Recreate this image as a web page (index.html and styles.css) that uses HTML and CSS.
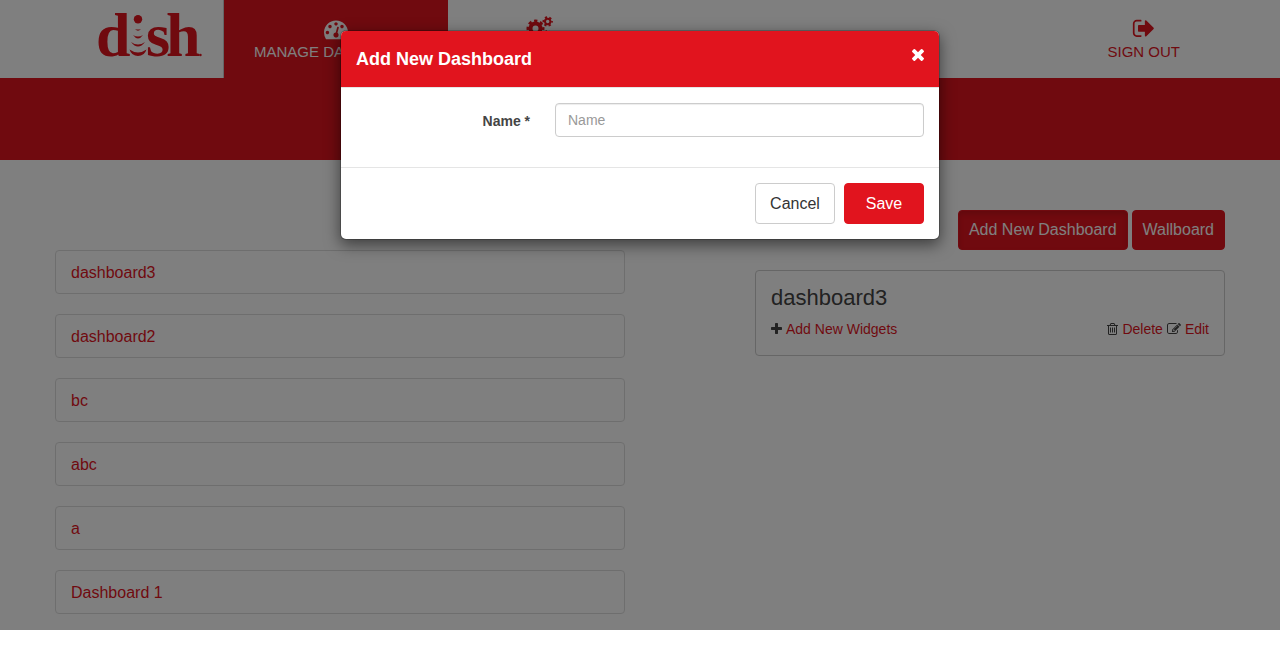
FILE: index.html
```html
<!DOCTYPE html>
<html lang="en">
<head>
<meta charset="utf-8">
<meta name="viewport" content="width=device-width, initial-scale=1">
<title>Manage Dashboard</title>
<link rel="stylesheet" href="styles.css">
</head>
<body>
<div class="app">
  <header class="topbar">
    <a class="brand" href="#" aria-label="dish">
      <svg class="brand-logo" viewBox="0 0 106 46">
        <text class="brand-text" y="42"><tspan x="-2">d</tspan><tspan x="48">s</tspan><tspan x="68">h</tspan></text>
        <circle cx="40" cy="5.300" r="4.200"/>
        <path d="M37 15q3 1 6 0q-3 3.500-6 0zM35 21q5 3 10 0q-5 7-10 0zM33 28q7 5 14 0q-7 9-14 0zM31.500 35.500q8.500 6 17 0q-2 6.500-8.500 6.500t-8.500-6.500z"/>
        <circle cx="102.500" cy="41" r="1.200"/>
      </svg>
    </a>
    <nav class="nav">
      <a class="nav-item nav-item-active" href="#">
        <svg class="nav-icon" viewBox="0 0 1792 1792"><path d="M384 1152q0-53-37.500-90.500t-90.500-37.500-90.500 37.500-37.500 90.500 37.500 90.500 90.500 37.500 90.500-37.500 37.500-90.500zm192-448q0-53-37.500-90.500t-90.500-37.500-90.500 37.500-37.500 90.500 37.500 90.500 90.500 37.500 90.500-37.500 37.500-90.500zm428 481l101-382q6-26-7.500-48.500t-38.500-29.500-48 6.500-30 39.500l-101 382q-60 5-107 43.500t-63 98.500q-20 77 20 146t117 89 146-20 89-117q16-60-6-117t-72-91zm660-33q0-53-37.500-90.500t-90.500-37.500-90.500 37.500-37.500 90.500 37.500 90.500 90.500 37.500 90.500-37.500 37.500-90.500zm-640-640q0-53-37.500-90.500t-90.500-37.500-90.500 37.500-37.500 90.500 37.500 90.500 90.500 37.500 90.500-37.500 37.500-90.500zm448 192q0-53-37.500-90.500t-90.500-37.500-90.500 37.500-37.500 90.500 37.500 90.500 90.500 37.500 90.500-37.500 37.500-90.500zm320 448q0 261-141 483-19 29-54 29h-1402q-35 0-54-29-141-221-141-483 0-182 71-348t191-286 286-191 348-71 348 71 286 191 191 286 71 348z"/></svg>
        <span>MANAGE DASHBOARD</span>
      </a>
      <a class="nav-item nav-item-settings" href="#" aria-label="Settings">
        <svg class="nav-icon nav-icon-wide" viewBox="0 0 26 24">
          <g fill="none" stroke="currentColor">
            <circle cx="8.500" cy="11.500" r="5" stroke-width="4"/>
            <circle cx="8.500" cy="11.500" r="7.500" stroke-width="3" stroke-dasharray="3.200 2.690" stroke-dashoffset="1.600"/>
            <circle cx="20.700" cy="4.500" r="2.700" stroke-width="2"/>
            <circle cx="20.700" cy="4.500" r="4.200" stroke-width="2" stroke-dasharray="2.200 2.198" stroke-dashoffset="1.100"/>
            <circle cx="20.700" cy="18.500" r="2.700" stroke-width="2"/>
            <circle cx="20.700" cy="18.500" r="4.200" stroke-width="2" stroke-dasharray="2.200 2.198" stroke-dashoffset="1.100"/>
          </g>
        </svg>
      </a>
    </nav>
    <a class="nav-item sign-out" href="#">
      <svg class="nav-icon" viewBox="0 50 1792 1792"><path d="M704 1440q0 4 1 20t.5 26.500-3 23.500-10 19.500-20.500 6.500h-320q-119 0-203.500-84.500t-84.500-203.500v-704q0-119 84.500-203.500t203.500-84.500h320q13 0 22.500 9.500t9.500 22.500q0 4 1 20t.5 26.500-3 23.500-10 19.500-20.500 6.500h-320q-66 0-113 47t-47 113v704q0 66 47 113t113 47h312l11.500 1 11.500 3 8 5.500 7 9 2 13.500zm928-544q0 26-19 45l-544 544q-19 19-45 19t-45-19-19-45v-288h-448q-26 0-45-19t-19-45v-384q0-26 19-45t45-19h448v-288q0-26 19-45t45-19 45 19l544 544q19 19 19 45z"/></svg>
      <span>SIGN OUT</span>
    </a>
  </header>
  <div class="banner"></div>
  <main class="content">
    <ul class="dash-list">
      <li><a class="dash-link" href="#">dashboard3</a></li>
      <li><a class="dash-link" href="#">dashboard2</a></li>
      <li><a class="dash-link" href="#">bc</a></li>
      <li><a class="dash-link" href="#">abc</a></li>
      <li><a class="dash-link" href="#">a</a></li>
      <li><a class="dash-link" href="#">Dashboard 1</a></li>
    </ul>
    <section class="detail">
      <div class="toolbar">
        <button class="tool-btn tool-btn-pressed" type="button">Add New Dashboard</button>
        <button class="tool-btn" type="button">Wallboard</button>
      </div>
      <article class="card">
        <h2 class="card-title">dashboard3</h2>
        <div class="card-actions">
          <span class="action">
            <svg class="action-icon" viewBox="192 128 1408 1536"><path d="M1600 736v192q0 40-28 68t-68 28h-416v416q0 40-28 68t-68 28h-192q-40 0-68-28t-28-68v-416h-416q-40 0-68-28t-28-68v-192q0-40 28-68t68-28h416v-416q0-40 28-68t68-28h192q40 0 68 28t28 68v416h416q40 0 68 28t28 68z"/></svg>
            <a href="#">Add New Widgets</a>
          </span>
          <span class="action action-end">
            <svg class="action-icon" viewBox="192 128 1408 1536"><path d="M704 736v576q0 14-9 23t-23 9h-64q-14 0-23-9t-9-23v-576q0-14 9-23t23-9h64q14 0 23 9t9 23zm256 0v576q0 14-9 23t-23 9h-64q-14 0-23-9t-9-23v-576q0-14 9-23t23-9h64q14 0 23 9t9 23zm256 0v576q0 14-9 23t-23 9h-64q-14 0-23-9t-9-23v-576q0-14 9-23t23-9h64q14 0 23 9t9 23zm128 724v-948h-896v948q0 22 7 40.500t14.500 27 10.500 8.500h832q3 0 10.500-8.500t14.500-27 7-40.500zm-672-1076h448l-48-117q-7-9-17-11h-317q-10 2-17 11zm928 32v64q0 14-9 23t-23 9h-96v948q0 83-47 143.500t-113 60.500h-832q-66 0-113-58.500t-47-141.500v-952h-96q-14 0-23-9t-9-23v-64q0-14 9-23t23-9h309l70-167q15-37 54-63t79-26h320q40 0 79 26t54 63l70 167h309q14 0 23 9t9 23z"/></svg>
            <a href="#">Delete</a>
          </span>
          <span class="action">
            <svg class="action-icon action-icon-wide" viewBox="0 0 1792 1792"><path d="M888 1184l116-116-152-152-116 116v56h96v96h56zm440-720q-16-16-33 1l-350 350q-17 17-1 33t33-1l350-350q17-17 1-33zm80 594v190q0 119-84.500 203.500t-203.500 84.500h-832q-119 0-203.500-84.500t-84.500-203.500v-832q0-119 84.500-203.500t203.500-84.500h832q63 0 117 25 15 7 18 23 3 17-9 29l-49 49q-14 14-32 8-23-6-45-6h-832q-66 0-113 47t-47 113v832q0 66 47 113t113 47h832q66 0 113-47t47-113v-126q0-13 9-22l64-64q15-15 35-7t20 29zm-96-738l288 288-672 672h-288v-288zm444 132l-92 92-288-288 92-92q28-28 68-28t68 28l152 152q28 28 28 68t-28 68z"/></svg>
            <a href="#">Edit</a>
          </span>
        </div>
      </article>
    </section>
  </main>
  <div class="backdrop">
    <form class="modal" role="dialog" aria-modal="true" aria-labelledby="modal-title">
      <div class="modal-header">
        <h1 class="modal-title" id="modal-title">Add New Dashboard</h1>
        <button class="modal-close" type="button" aria-label="Close">
          <svg class="close-icon" viewBox="302 366 1188 1188"><path d="M1490 1322q0 40-28 68l-136 136q-28 28-68 28t-68-28l-294-294-294 294q-28 28-68 28t-68-28l-136-136q-28-28-28-68t28-68l294-294-294-294q-28-28-28-68t28-68l136-136q28-28 68-28t68 28l294 294 294-294q28-28 68-28t68 28l136 136q28 28 28 68t-28 68l-294 294 294 294q28 28 28 68z"/></svg>
        </button>
      </div>
      <div class="modal-body">
        <label class="field-label" for="name">Name *</label>
        <input class="field-input" id="name" type="text" placeholder="Name">
      </div>
      <div class="modal-footer">
        <button class="modal-btn" type="button">Cancel</button>
        <button class="modal-btn modal-btn-primary" type="submit">Save</button>
      </div>
    </form>
  </div>
</div>
</body>
</html>
```
FILE: styles.css
```css
* {
  box-sizing: border-box;
}

body {
  margin: 0;
  background: #fff;
  color: #444;
  font-family: "Liberation Sans", Arial, sans-serif;
  font-size: 14px;
  line-height: 20px;
}

a {
  color: #e1141e;
  text-decoration: none;
}

button,
input {
  font-family: inherit;
}

svg {
  display: block;
  flex: none;
  fill: currentColor;
}

.app {
  position: relative;
}

/* Top navigation */
.topbar {
  display: flex;
  height: 78px;
}

.brand {
  width: 224px;
  padding: 14px 0 0 98px;
  border-right: 1px solid #ccc;
}

.brand-logo {
  width: 106px;
  height: 46px;
  overflow: visible;
}

.brand-text {
  font-family: "Liberation Serif", "Times New Roman", serif;
  font-size: 62px;
  font-weight: bold;
}

.nav {
  display: flex;
}

.nav-item {
  display: flex;
  flex-direction: column;
  align-items: center;
  padding: 17px 30px 0;
  font-size: 15px;
  line-height: 22px;
  white-space: nowrap;
}

.nav-item-active {
  background: #e1141e;
  color: #fff;
}

.nav-item-settings {
  min-width: 184px;
}

.nav-icon {
  width: 24px;
  height: 24px;
}

.nav-icon-wide {
  width: 26px;
  overflow: visible;
}

.sign-out {
  margin: 0 70px 0 auto;
}

.banner {
  height: 82px;
  background: #e1141e;
}

/* Page content */
.content {
  display: grid;
  grid-template-columns: 57fr 47fr;
  gap: 130px;
  max-width: 1170px;
  margin: 0 auto;
  padding: 50px 0 16px;
}

.dash-list {
  display: grid;
  align-content: start;
  gap: 20px;
  margin: 40px 0 0;
  padding: 0;
  list-style: none;
}

.dash-link {
  display: block;
  padding: 12px 15px 10px;
  border: 1px solid #ddd;
  border-radius: 4px;
  font-size: 16px;
}

.toolbar {
  display: flex;
  justify-content: flex-end;
  gap: 4px;
  margin-bottom: 20px;
}

.tool-btn {
  height: 40px;
  padding: 0 10px;
  border: 1px solid #e1141e;
  border-radius: 4px;
  background: #e1141e;
  color: #fff;
  font-size: 16px;
}

.tool-btn-pressed {
  box-shadow: inset 0 3px 5px rgba(0, 0, 0, 0.125);
}

.card {
  padding: 15px;
  border: 1px solid #ccc;
  border-radius: 4px;
}

.card-title {
  margin: 0 0 8px;
  font-size: 22px;
  font-weight: normal;
  line-height: 24px;
}

.card-actions {
  display: flex;
  gap: 4px;
  line-height: 22px;
}

.action {
  display: flex;
  align-items: center;
  gap: 4px;
}

.action-end {
  margin-left: auto;
}

.action-icon {
  width: 11px;
  height: 12px;
}

.action-icon-wide {
  width: 14px;
  height: 14px;
}

/* Dialog */
.backdrop {
  position: absolute;
  inset: 0;
  padding-top: 30px;
  background: rgba(0, 0, 0, 0.5);
}

.modal {
  max-width: 600px;
  margin: 0 auto;
  border: 1px solid rgba(0, 0, 0, 0.2);
  border-radius: 6px;
  background: #fff;
  background-clip: padding-box;
  box-shadow: 0 5px 15px rgba(0, 0, 0, 0.5);
}

.modal-header {
  display: flex;
  align-items: flex-start;
  justify-content: space-between;
  padding: 15px;
  border-radius: 5px 5px 0 0;
  background: #e1141e;
  color: #fff;
}

.modal-title {
  margin: 0;
  font-size: 18px;
  line-height: 26px;
}

.modal-close {
  padding: 3px 0;
  border: 0;
  background: none;
  color: inherit;
}

.close-icon {
  width: 12px;
  height: 12px;
}

.modal-body {
  display: grid;
  grid-template-columns: 174px 1fr;
  gap: 25px;
  padding: 15px 15px 30px;
  border-top: 1px solid #e5e5e5;
}

.field-label {
  padding-top: 8px;
  font-weight: bold;
  text-align: right;
}

.field-input {
  width: 100%;
  height: 34px;
  padding: 6px 12px;
  border: 1px solid #ccc;
  border-radius: 4px;
  box-shadow: inset 0 1px 1px rgba(0, 0, 0, 0.075);
  font-size: 14px;
}

.field-input::placeholder {
  color: #999;
}

.modal-footer {
  display: flex;
  justify-content: flex-end;
  gap: 9px;
  padding: 15px;
  border-top: 1px solid #e5e5e5;
}

.modal-btn {
  width: 80px;
  height: 41px;
  padding: 0;
  border: 1px solid #ccc;
  border-radius: 4px;
  background: #fff;
  color: #333;
  font-size: 16px;
}

.modal-btn-primary {
  border-color: #e1141e;
  background: #e1141e;
  color: #fff;
}
```
